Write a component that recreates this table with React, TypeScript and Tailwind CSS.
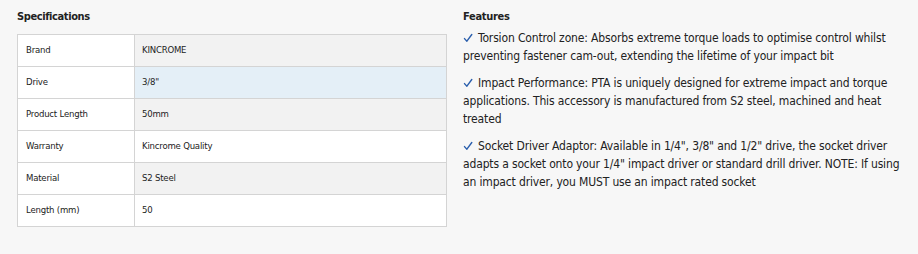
import React, { useState } from 'react';

const specs = [
    { label: 'Brand', value: 'KINCROME' },
    { label: 'Drive', value: '3/8"' },
    { label: 'Product Length', value: '50mm' },
    { label: 'Warranty', value: 'Kincrome Quality' },
    { label: 'Material', value: 'S2 Steel' },
    { label: 'Length (mm)', value: '50' },
];

const features = [
    'Torsion Control zone: Absorbs extreme torque loads to optimise control whilst preventing fastener cam-out, extending the lifetime of your impact bit',
    'Impact Performance: PTA is uniquely designed for extreme impact and torque applications. This accessory is manufactured from S2 steel, machined and heat treated',
    'Socket Driver Adaptor: Available in 1/4", 3/8" and 1/2" drive, the socket driver adapts a socket onto your 1/4" impact driver or standard drill driver. NOTE: If using an impact driver, you MUST use an impact rated socket',
];

const font = 'font-["DejaVu_Sans_Condensed","DejaVu_Sans",sans-serif]';

const Check = () => (
    <svg
        viewBox="0 0 10 10"
        className="inline-block w-[10px] h-[10px] mr-[5px] align-[-1px]"
        fill="none"
        stroke="#2b5fad"
        strokeWidth="1.4"
        strokeLinecap="round"
        strokeLinejoin="round"
    >
        <path d="M1.5 5.6 L3.9 8.2 L8.8 1.5" />
    </svg>
);

export default function App() {
    const [hovered, setHovered] = useState(1);

    return (
        <div className={`w-[918px] h-[254px] bg-[#f7f7f7] text-[#222] ${font}`}>
            <div className="flex gap-4 pl-[17px] pt-[9px]">
                <div className="w-[430px] shrink-0">
                    <h3 className="text-[11px] font-bold leading-[16px] tracking-[-0.4px] mb-[9px]">Specifications</h3>
                    <table className="w-full border-collapse border border-[#d4d4d4] text-[9.5px] tracking-[-0.2px]">
                        <tbody>
                            {specs.map((row, i) => {
                                let valueBg = i % 2 === 0 ? 'bg-[#f2f2f2]' : 'bg-white';
                                if (hovered === i) valueBg = 'bg-[#e4eff7]';
                                return (
                                    <tr
                                        key={row.label}
                                        className="h-[32px]"
                                        onMouseEnter={() => setHovered(i)}
                                    >
                                        <td className="w-[117px] border border-[#d4d4d4] bg-white pl-[8px]">
                                            {row.label}
                                        </td>
                                        <td className={`border border-[#d4d4d4] pl-[7px] ${valueBg}`}>
                                            {row.value}
                                        </td>
                                    </tr>
                                );
                            })}
                        </tbody>
                    </table>
                </div>
                <div className="w-[440px]">
                    <h3 className="text-[11px] font-bold leading-[16px] tracking-[-0.3px] mb-[4px]">Features</h3>
                    {features.map((f) => (
                        <p key={f} className="text-[12px] leading-[18px] tracking-[-0.15px] mb-[9px]">
                            <Check />
                            {f}
                        </p>
                    ))}
                </div>
            </div>
        </div>
    );
}
